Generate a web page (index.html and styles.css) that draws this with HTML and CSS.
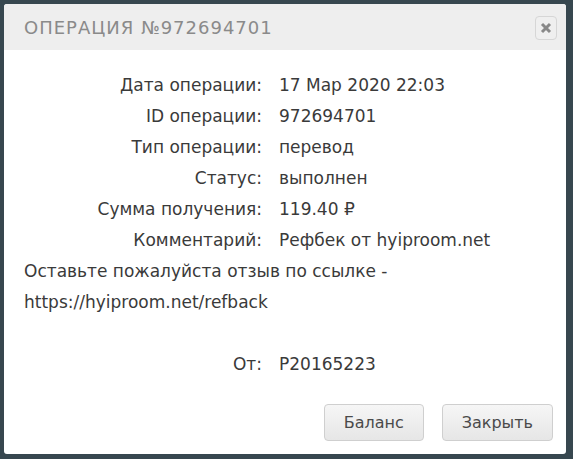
FILE: index.html
```html
<!DOCTYPE html>
<html lang="ru">
<head>
<meta charset="utf-8">
<title>Операция</title>
<link rel="stylesheet" href="styles.css">
</head>
<body>
<div class="dialog">
  <div class="dialog-header">
    <span class="dialog-title">Операция №972694701</span>
    <button class="close-btn" aria-label="Закрыть">
      <svg width="12" height="12" viewBox="0 0 12 12"><path d="M2 2 L10 10 M10 2 L2 10" stroke="#888" stroke-width="3" stroke-linecap="butt"/></svg>
    </button>
  </div>
  <div class="dialog-body">
    <div class="row"><span class="label">Дата операции:</span><span class="value">17 Мар 2020 22:03</span></div>
    <div class="row"><span class="label">ID операции:</span><span class="value">972694701</span></div>
    <div class="row"><span class="label">Тип операции:</span><span class="value">перевод</span></div>
    <div class="row"><span class="label">Статус:</span><span class="value">выполнен</span></div>
    <div class="row"><span class="label">Сумма получения:</span><span class="value">119.40 ₽</span></div>
    <div class="row"><span class="label">Комментарий:</span><span class="value">Рефбек от hyiproom.net</span></div>
    <p class="comment">Оставьте пожалуйста отзыв по ссылке -<br>https://hyiproom.net/refback</p>
    <div class="row"><span class="label">От:</span><span class="value">P20165223</span></div>
  </div>
  <div class="dialog-footer">
    <button class="btn">Баланс</button>
    <button class="btn">Закрыть</button>
  </div>
</div>
</body>
</html>
```
FILE: styles.css
```css
html, body {
  margin: 0;
  padding: 0;
  background: #37474f;
  height: 100%;
}
body {
  padding: 4px;
  box-sizing: border-box;
}
.dialog {
  width: 562px;
  height: 450px;
  background: #fff;
  border-radius: 3px;
  display: flex;
  flex-direction: column;
  overflow: hidden;
  font-family: "DejaVu Sans", sans-serif;
  color: #3a3a3a;
}
.dialog-header {
  height: 46px;
  background: #eeeeee;
  display: flex;
  align-items: center;
  justify-content: space-between;
  padding: 0 9px 0 20px;
  flex-shrink: 0;
}
.dialog-title {
  text-transform: uppercase;
  font-size: 18px;
  letter-spacing: 1px;
  color: #8a8a8a;
  font-family: "DejaVu Sans", sans-serif;
}
.close-btn {
  width: 22px;
  height: 24px;
  border: 1px solid #d6d6d6;
  border-radius: 4px;
  background: #efefef;
  display: flex;
  align-items: center;
  justify-content: center;
  padding: 0;
  margin-top: 2px;
}
.dialog-body {
  padding: 20px 20px 0 20px;
  font-size: 17px;
  line-height: 31px;
  flex: 1;
}
.row {
  display: flex;
  gap: 17px;
}
.label {
  width: 238px;
  text-align: right;
  flex-shrink: 0;
}
.comment {
  margin: 0 0 31px 0;
}
.dialog-footer {
  display: flex;
  justify-content: flex-end;
  gap: 18px;
  padding: 0 13px 13px 0;
}
.btn {
  height: 37px;
  padding: 0 19px;
  border: 1px solid #cfcfcf;
  border-radius: 4px;
  background: linear-gradient(#f6f6f6, #e6e6e6);
  font-family: "DejaVu Sans", sans-serif;
  font-size: 16px;
  color: #4a4a4a;
}
```
